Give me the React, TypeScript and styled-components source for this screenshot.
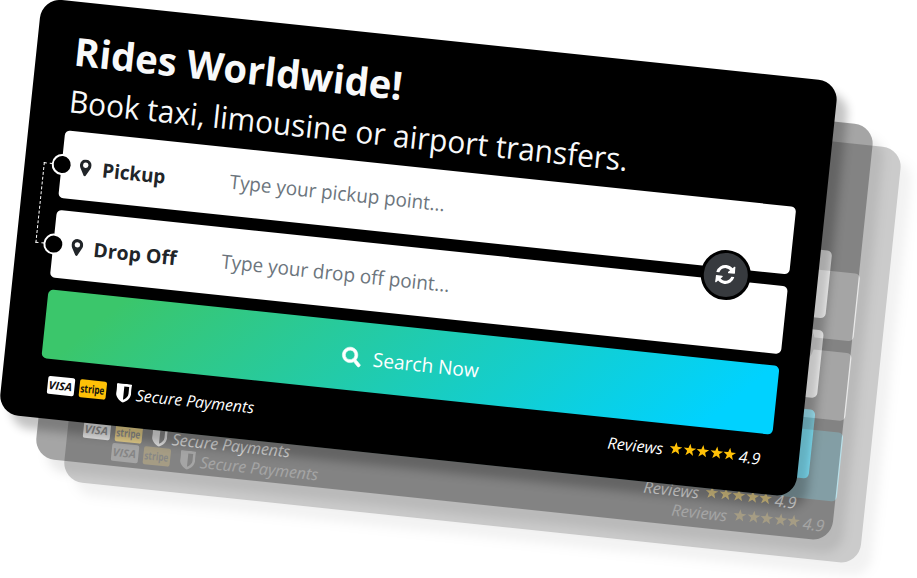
import React, { useLayoutEffect, useRef, useState } from "react";
import styled, { createGlobalStyle } from "styled-components";
import { FaSearch } from "react-icons/fa";

const GlobalStyle = createGlobalStyle`
  *, *::before, *::after { box-sizing: border-box; }
  body {
    margin: 0;
    background: #fff;
    font-family: "Open Sans", "Noto Sans", sans-serif;
    overflow: hidden;
  }
`;

const Stage = styled.main`
  position: relative;
  width: 917px;
  height: 578px;
  overflow: hidden;
  background: #fff;
`;

const Card = styled.section<{ $dx: number; $dy: number; $opacity: number }>`
  position: absolute;
  left: ${(p) => 42.1 + p.$dx}px;
  top: ${(p) => -1.8 + p.$dy}px;
  width: 801px;
  height: 417.5px;
  padding: 25px 29px 0 36.6px;
  border-radius: 20px;
  background: #000;
  color: #fff;
  opacity: ${(p) => p.$opacity};
  box-shadow: 12px 12px 10px rgba(0, 0, 0, 0.24);
  transform: rotate(6deg);
  transform-origin: 0 0;
`;

const FitBox = styled.span<{ $width: number }>`
  display: block;
  flex: none;
  width: ${(p) => p.$width}px;
  white-space: nowrap;
`;

const FitInner = styled.span`
  display: inline-block;
  transform-origin: 0 50%;
`;

/* Condenses or widens a line so that it fills the given width. */
function Fit({ width, children }: { width: number; children: string }) {
  const ref = useRef<HTMLSpanElement>(null);
  const [scale, setScale] = useState(1);
  useLayoutEffect(() => {
    if (ref.current) setScale(width / ref.current.offsetWidth);
  }, [width]);
  return (
    <FitBox $width={width}>
      <FitInner ref={ref} style={{ transform: `scaleX(${scale})` }}>
        {children}
      </FitInner>
    </FitBox>
  );
}

const Title = styled.h1`
  margin: 0 0 5.5px 1px;
  font-size: 39px;
  line-height: 48px;
  font-weight: 700;
  color: #f8f9fa;
`;

const Subtitle = styled.h2`
  margin: 0 0 10.5px 1px;
  font-size: 31px;
  line-height: 40px;
  font-weight: 400;
  color: #f8f9fa;
`;

const Fields = styled.div`
  position: relative;
  display: flex;
  flex-direction: column;
  gap: 12.5px;
`;

const Field = styled.label`
  position: relative;
  display: flex;
  align-items: center;
  height: 67.5px;
  padding-left: 18px;
  border-radius: 5px;
  background: #fff;
  color: #212529;
  font-size: 20px;
  line-height: 28px;
`;

const Dot = styled.i`
  position: absolute;
  left: -10px;
  top: 24px;
  width: 21px;
  height: 21px;
  border: 2.5px solid #fff;
  border-width: 2.5px;
  border-radius: 50%;
  background: #000;
`;

const Route = styled.i`
  position: absolute;
  left: -18px;
  top: 33.5px;
  width: 9px;
  height: 81px;
  border: 1px dashed #fff;
  border-right: 0;
`;

const FieldName = styled.span`
  display: flex;
  align-items: center;
  gap: 11px;
  width: 151.5px;
  padding-top: 3px;
  font-weight: 700;
  font-size: 19.5px;
  svg { width: 12px; height: 17px; flex: none; }
  span { position: relative; top: 0.5px; }
`;

const Hint = styled.span`
  padding-top: 1px;
  color: #6c757d;
  font-size: 19.5px;
`;

const Swap = styled.button`
  position: absolute;
  left: 647.4px;
  top: 49.5px;
  display: grid;
  place-items: center;
  width: 50px;
  height: 50px;
  padding: 0;
  border: 3px solid #000;
  border-radius: 50%;
  background: #373a3e;
  color: #fff;
  svg { width: 19px; height: 19px; }
`;

const Search = styled.button`
  display: flex;
  align-items: center;
  justify-content: center;
  gap: 11.5px;
  width: 100%;
  height: 69px;
  margin: 12.5px 0 0;
  padding: 2px 0 0 0;
  border: 0;
  border-radius: 5px;
  background: linear-gradient(135deg, #3bc66b 10%, #00d2ff 91%);
  color: #fff;
  font: 400 19.5px/28px "Open Sans", "Noto Sans", sans-serif;
  svg { width: 19px; height: 19px; stroke: currentColor; stroke-width: 14px; overflow: visible; }
`;

const Footer = styled.footer`
  display: flex;
  justify-content: space-between;
  align-items: flex-start;
  padding: 13px 9px 0 9px;
  font-size: 16px;
  line-height: 24px;
  font-style: italic;
`;

const Payments = styled.div`
  display: flex;
  align-items: center;
  gap: 5px;
  svg { width: 15px; height: 19px; margin: 0 0 0 5px; }
`;

const PaymentsLabel = styled.div`
  padding-top: 2px;
`;

const Badge = styled.span<{ $tone: string; $slant: string }>`
  display: grid;
  place-items: center;
  width: 27px;
  height: 18px;
  border-radius: 2px;
  background: ${(p) => p.$tone};
  color: #111;
  font-size: 11px;
  line-height: 16px;
  font-weight: 700;
  font-style: ${(p) => p.$slant};
`;

const Reviews = styled.div`
  display: flex;
  align-items: center;
  margin-top: -0.5px;
`;

const Stars = styled.span`
  display: flex;
  gap: 0.5px;
  margin: 0 3px 2px 6px;
  color: #ffc107;
  svg { width: 13px; height: 13px; }
`;

const PinIcon = () => (
  <svg viewBox="0 0 12 17" fill="currentColor">
    <path fillRule="evenodd" d="M6 0a5.8 5.8 0 0 1 5.8 5.8c0 1.500-.5 2.600-1.100 3.800L7 16.300c-.4.900-1.600.9-2 0L1.300 9.600C.7 8.400.2 7.300.2 5.800A5.800 5.800 0 0 1 6 0Zm0 3.100a2.700 2.700 0 1 0 0 5.400 2.700 2.700 0 0 0 0-5.400Z" />
  </svg>
);

const RefreshIcon = () => (
  <svg viewBox="0 0 1536 1536" fill="currentColor">
    <path d="M1511 928q0 5-1 7-64 268-268 434.500t-478 166.500q-146 0-282.500-55t-243.500-157l-129 129q-19 19-45 19t-45-19-19-45v-448q0-26 19-45t45-19h448q26 0 45 19t19 45-19 45l-137 137q71 66 161 102t187 36q134 0 250-65t186-179q11-17 53-117 8-23 30-23h192q13 0 22.500 9.500t9.500 22.500zm25-800v448q0 26-19 45t-45 19h-448q-26 0-45-19t-19-45 19-45l138-138q-148-137-349-137-134 0-250 65t-186 179q-11 17-53 117-8 23-30 23h-199q-13 0-22.500-9.500t-9.500-22.500v-7q65-268 270-434.500t480-166.500q146 0 284 55.500t245 156.500l130-129q19-19 45-19t45 19 19 45z" />
  </svg>
);

const ShieldIcon = () => (
  <svg viewBox="0 0 15 19" fill="currentColor">
    <path fillRule="evenodd" d="M.8 0h13.400q.8 0 .8.800v8.700c0 4.500-3.300 7.500-7.500 9.500C3.300 17 0 14 0 9.500V.8Q0 0 .8 0ZM7.500 2.800v13.300c3-1.700 4.900-3.700 4.900-6.600V2.800Z" />
  </svg>
);

const StarIcon = () => (
  <svg viewBox="0 0 24 24" fill="currentColor">
    <path d="M12 .8l2.900 8.200 8.700.2-6.900 5.300 2.500 8.400-7.200-5-7.200 5 2.500-8.400L.4 9.200l8.700-.2Z" />
  </svg>
);

type CardProps = { dx?: number; dy?: number; opacity?: number };

function BookingCard({ dx = 0, dy = 0, opacity = 1 }: CardProps) {
  return (
    <Card $dx={dx} $dy={dy} $opacity={opacity}>
      <Title><Fit width={329.5}>Rides Worldwide!</Fit></Title>
      <Subtitle><Fit width={562}>Book taxi, limousine or airport transfers.</Fit></Subtitle>
      <Fields>
        <Route />
        <Field>
          <Dot />
          <FieldName><PinIcon /><Fit width={63}>Pickup</Fit></FieldName>
          <Hint><Fit width={216}>Type your pickup point...</Fit></Hint>
        </Field>
        <Field>
          <Dot />
          <FieldName><PinIcon /><Fit width={83}>Drop Off</Fit></FieldName>
          <Hint><Fit width={229}>Type your drop off point...</Fit></Hint>
        </Field>
        <Swap><RefreshIcon /></Swap>
      </Fields>
      <Search><FaSearch /><Fit width={106}>Search Now</Fit></Search>
      <Footer>
        <Payments>
          <Badge $tone="#fff" $slant="italic"><Fit width={24}>VISA</Fit></Badge>
          <Badge $tone="#ffc107" $slant="normal"><Fit width={24}>stripe</Fit></Badge>
          <ShieldIcon />
          <PaymentsLabel><Fit width={119}>Secure Payments</Fit></PaymentsLabel>
        </Payments>
        <Reviews>
          <Fit width={56}>Reviews</Fit>
          <Stars>{[1, 2, 3, 4, 5].map((n) => <StarIcon key={n} />)}</Stars>
          <Fit width={22}>4.9</Fit>
        </Reviews>
      </Footer>
    </Card>
  );
}

export default function App() {
  return (
    <>
      <GlobalStyle />
      <Stage>
        <BookingCard dx={64} dy={67} opacity={0.2} />
        <BookingCard dx={36} dy={44} opacity={0.35} />
        <BookingCard />
      </Stage>
    </>
  );
}
